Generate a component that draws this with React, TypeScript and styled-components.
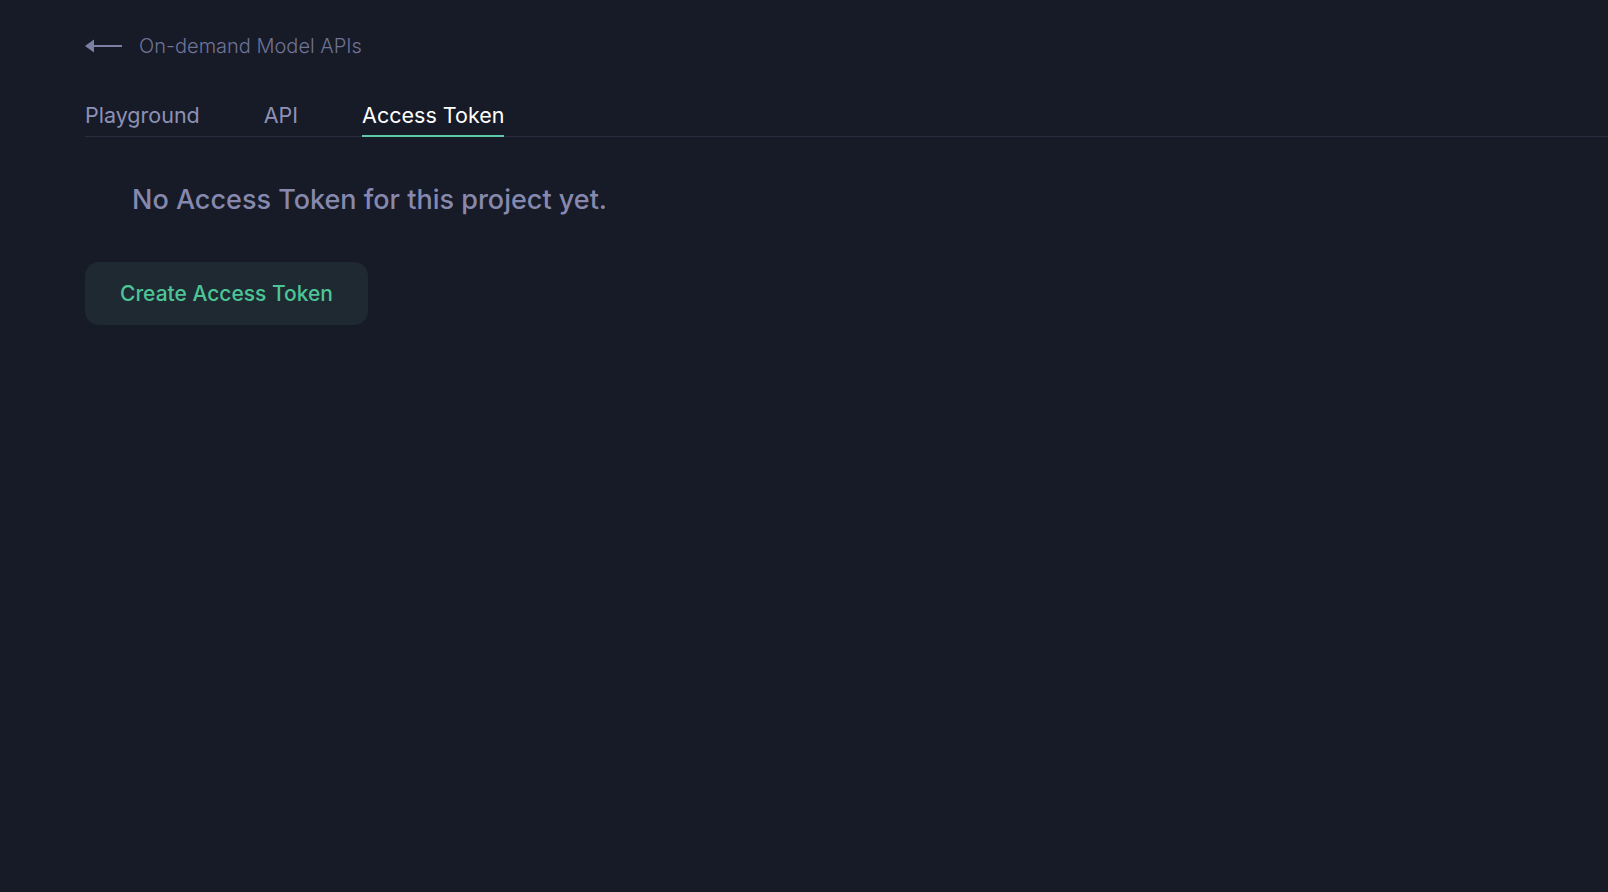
import styled, { createGlobalStyle } from "styled-components";

const GlobalStyle = createGlobalStyle`
    html, body {
        margin: 0;
        padding: 0;
        background: #171a27;
    }
    body {
        font-family: "Inter", "Noto Sans", sans-serif;
    }
`;

const tabs = ["Playground", "API", "Access Token"];

export default function App() {
    return (
        <>
            <GlobalStyle />
            <Page>
                <BackLink>
                    <svg width="37" height="16" viewBox="0 0 37 16" fill="none">
                        <path d="M4 8H37" stroke="#7c80a3" strokeWidth="2" />
                        <path d="M0 8L9 1.5V14.5Z" fill="#7c80a3" />
                    </svg>
                    <span>On-demand Model APIs</span>
                </BackLink>
                <TabBar>
                    {tabs.map((tab) => (
                        <Tab key={tab} $active={tab === "Access Token"}>
                            {tab}
                        </Tab>
                    ))}
                </TabBar>
                <Empty>
                    <EmptyTitle>No Access Token for this project yet.</EmptyTitle>
                    <CreateButton type="button">Create Access Token</CreateButton>
                </Empty>
            </Page>
        </>
    );
}

const Page = styled.div`
    min-height: 892px;
    padding: 28px 0 0 85px;
    box-sizing: border-box;
    background: #171a27;
`;

const BackLink = styled.div`
    display: flex;
    align-items: center;
    gap: 17px;
    height: 36px;
    color: #6f7395;
    font-size: 20px;
    font-weight: 300;
    cursor: pointer;
`;

const TabBar = styled.div`
    display: flex;
    gap: 64px;
    margin-top: 38px;
    border-bottom: 1px solid #2a2c40;
`;

const Tab = styled.div<{ $active?: boolean }>`
    padding-bottom: 7px;
    font-size: 21.5px;
    font-weight: 400;
    color: ${(p) => (p.$active ? "#ffffff" : "#8d91b5")};
    border-bottom: 2px solid ${(p) => (p.$active ? "#5ccaa8" : "transparent")};
    margin-bottom: -1px;
    cursor: pointer;
`;

const Empty = styled.div`
    display: flex;
    flex-direction: column;
    align-items: flex-start;
`;

const EmptyTitle = styled.h2`
    margin: 46px 0 0 47px;
    font-size: 27px;
    font-weight: 500;
    color: #8689ad;
`;

const CreateButton = styled.button`
    margin-top: 46px;
    width: 283px;
    height: 63px;
    border: none;
    border-radius: 14px;
    background: #1f2932;
    color: #4cc596;
    font-family: inherit;
    font-size: 21px;
    font-weight: 500;
    cursor: pointer;
`;
